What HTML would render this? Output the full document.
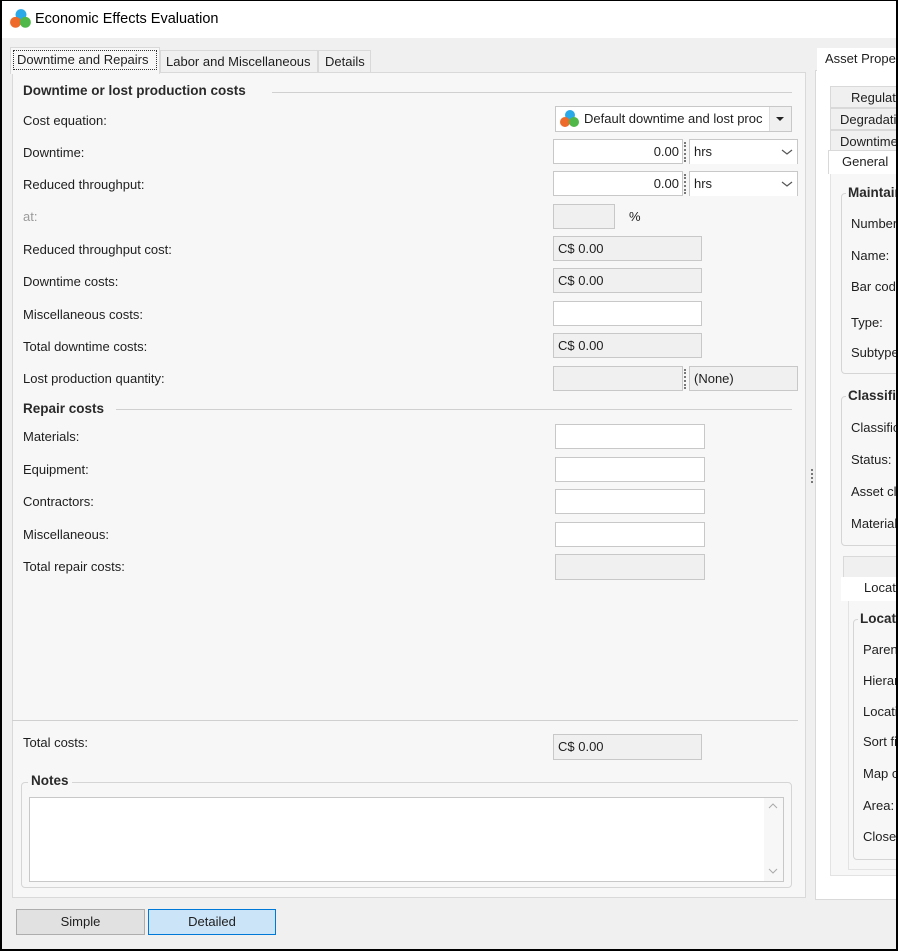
<!DOCTYPE html>
<html><head><meta charset="utf-8"><style>
*{box-sizing:border-box;margin:0;padding:0}
body{width:898px;height:951px;position:relative;overflow:hidden;background:#f0f0f0;font-family:"Liberation Sans",sans-serif;font-size:13px;color:#1e1e1e}
.a{position:absolute;white-space:nowrap}
.l{position:absolute;left:23px;line-height:16px}
.b{font-weight:bold;font-size:13.5px;color:#2a2a2a}
.f{position:absolute;border:1px solid #c8c8c8;background:#fff;height:25px;line-height:23px;padding-left:4px}
.g{background:#f0f0f0}
.hl{position:absolute;height:1px;background:#d0d0d0}
.dots{position:absolute;width:2px;border-left:2px dotted #777}
</style></head><body>
<div class="a" style="left:0;top:0;width:898px;height:38px;background:#fff"></div>
<svg class="a" style="left:9px;top:8px" width="24" height="22" viewBox="0 0 22 20">
<circle cx="11" cy="6" r="5" fill="#2aa9e8"/><circle cx="6" cy="13" r="5" fill="#ee6a2a"/><circle cx="15" cy="13" r="5" fill="#4fb848"/></svg>
<div class="a" style="left:35px;top:11px;font-size:14.5px;color:#000">Economic Effects Evaluation</div>
<div class="a" style="left:160px;top:50px;width:158px;height:23px;background:#f0f0f0;border:1px solid #d9d9d9;padding:3px 0 0 5px">Labor and Miscellaneous</div>
<div class="a" style="left:318px;top:50px;width:53px;height:23px;background:#f0f0f0;border:1px solid #d9d9d9;padding:3px 0 0 6px">Details</div>
<div class="a" style="left:12px;top:72px;width:794px;height:826px;background:#f7f7f7;border:1px solid #d9d9d9"></div>
<div class="a" style="left:10px;top:47px;width:150px;height:27px;background:#f7f7f7;border:1px solid #d9d9d9;border-bottom:none"></div>
<div class="a" style="left:13px;top:50px;width:144px;height:20px;border:1px dotted #333;padding:1px 0 0 3px">Downtime and Repairs</div>
<div class="l b" style="top:83px">Downtime or lost production costs</div>
<div class="hl" style="left:272px;top:92px;width:520px"></div>
<div class="l" style="top:113px">Cost equation:</div>
<div class="l" style="top:145px">Downtime:</div>
<div class="l" style="top:177px">Reduced throughput:</div>
<div class="l" style="top:209px;color:#9a9a9a">at:</div>
<div class="l" style="top:242px">Reduced throughput cost:</div>
<div class="l" style="top:274px">Downtime costs:</div>
<div class="l" style="top:307px">Miscellaneous costs:</div>
<div class="l" style="top:339px">Total downtime costs:</div>
<div class="l" style="top:371px">Lost production quantity:</div>
<div class="f" style="left:555px;top:106px;width:237px;height:26px;background:#fff;padding-left:28px">Default downtime and lost proc</div>
<svg class="a" style="left:559px;top:109px" width="22" height="20" viewBox="0 0 22 20"><circle cx="11" cy="6" r="5" fill="#2aa9e8"/><circle cx="6" cy="13" r="5" fill="#ee6a2a"/><circle cx="15" cy="13" r="5" fill="#4fb848"/></svg>
<div class="a" style="left:769px;top:107px;width:22px;height:24px;background:#f0f0f0;border-left:1px solid #ddd"></div>
<div class="a" style="left:776px;top:117px;border:4px solid transparent;border-top:4px solid #222"></div>
<div class="f" style="left:553px;top:139px;width:130px;text-align:right;padding-right:3px">0.00</div>
<div class="dots" style="left:684px;top:142px;height:20px"></div>
<div class="f" style="left:689px;top:139px;width:109px;border-bottom:none">hrs</div>
<svg class="a" style="left:781px;top:148px" width="12" height="8"><path d="M1 2 L6 6 L11 2" fill="none" stroke="#555" stroke-width="1.2"/></svg>
<div class="f" style="left:553px;top:171px;width:130px;text-align:right;padding-right:3px">0.00</div>
<div class="dots" style="left:684px;top:174px;height:20px"></div>
<div class="f" style="left:689px;top:171px;width:109px;border-bottom:none">hrs</div>
<svg class="a" style="left:781px;top:180px" width="12" height="8"><path d="M1 2 L6 6 L11 2" fill="none" stroke="#555" stroke-width="1.2"/></svg>
<div class="f g" style="left:553px;top:204px;width:62px"></div>
<div class="a" style="left:629px;top:209px">%</div>
<div class="f g" style="left:553px;top:236px;width:149px">C$ 0.00</div>
<div class="f g" style="left:553px;top:268px;width:149px">C$ 0.00</div>
<div class="f" style="left:553px;top:301px;width:149px"></div>
<div class="f g" style="left:553px;top:333px;width:149px">C$ 0.00</div>
<div class="f g" style="left:553px;top:366px;width:130px"></div>
<div class="dots" style="left:684px;top:369px;height:20px"></div>
<div class="f g" style="left:689px;top:366px;width:109px">(None)</div>
<div class="l b" style="top:401px">Repair costs</div>
<div class="hl" style="left:116px;top:409px;width:676px"></div>
<div class="l" style="top:429px">Materials:</div>
<div class="l" style="top:462px">Equipment:</div>
<div class="l" style="top:494px">Contractors:</div>
<div class="l" style="top:527px">Miscellaneous:</div>
<div class="l" style="top:559px">Total repair costs:</div>
<div class="f" style="left:555px;top:424px;width:150px"></div>
<div class="f" style="left:555px;top:457px;width:150px"></div>
<div class="f" style="left:555px;top:489px;width:150px"></div>
<div class="f" style="left:555px;top:522px;width:150px"></div>
<div class="f g" style="left:555px;top:554px;width:150px;height:26px"></div>
<div class="hl" style="left:12px;top:720px;width:786px"></div>
<div class="l" style="top:735px">Total costs:</div>
<div class="f g" style="left:553px;top:734px;width:149px;height:26px">C$ 0.00</div>
<div class="a" style="left:21px;top:782px;width:771px;height:106px;border:1px solid #d5d5d5;border-radius:4px"></div>
<div class="a b" style="left:28px;top:773px;background:#f7f7f7;padding:0 3px">Notes</div>
<div class="a" style="left:29px;top:797px;width:755px;height:85px;background:#fff;border:1px solid #c8c8c8"></div>
<div class="a" style="left:764px;top:798px;width:19px;height:83px;background:#f7f7f7"></div>
<svg class="a" style="left:768px;top:803px" width="10" height="7"><path d="M1 5 L5 1 L9 5" fill="none" stroke="#aaa"/></svg>
<svg class="a" style="left:768px;top:868px" width="10" height="7"><path d="M1 1 L5 5 L9 1" fill="none" stroke="#aaa"/></svg>
<div class="a" style="left:16px;top:909px;width:129px;height:26px;background:#e1e1e1;border:1px solid #adadad;text-align:center;line-height:24px">Simple</div>
<div class="a" style="left:148px;top:909px;width:128px;height:26px;background:#cce4f7;border:1px solid #0078d7;text-align:center;line-height:24px">Detailed</div>
<div class="dots" style="left:811px;top:469px;height:14px"></div>
<div class="a" style="left:815px;top:70px;width:83px;height:830px;background:#fff;border:1px solid #d9d9d9"></div>
<div class="a" style="left:817px;top:48px;width:81px;height:24px;background:#fff;padding:3px 0 0 8px">Asset Properties</div>
<div class="a" style="left:830px;top:86px;width:68px;height:22px;background:#f0f0f0;border:1px solid #d9d9d9;padding:3px 0 0 20px">Regulatory</div>
<div class="a" style="left:830px;top:108px;width:68px;height:22px;background:#f0f0f0;border:1px solid #d9d9d9;padding:3px 0 0 9px">Degradation</div>
<div class="a" style="left:830px;top:130px;width:68px;height:22px;background:#f0f0f0;border:1px solid #d9d9d9;padding:3px 0 0 9px">Downtime</div>
<div class="a" style="left:830px;top:172px;width:68px;height:704px;background:#f7f7f7;border:1px solid #e3e3e3"></div>
<div class="a" style="left:828px;top:150px;width:70px;height:24px;background:#fff;border:1px solid #d9d9d9;border-bottom:none;padding:3px 0 0 13px">General</div>
<div class="a" style="left:841px;top:193px;width:70px;height:181px;border:1px solid #d5d5d5;border-radius:4px"></div>
<div class="a b" style="left:846px;top:185px;background:#f7f7f7;padding:0 2px">Maintainable</div>
<div class="a" style="left:851px;top:216px">Number:</div>
<div class="a" style="left:851px;top:248px">Name:</div>
<div class="a" style="left:851px;top:279px">Bar code:</div>
<div class="a" style="left:851px;top:315px">Type:</div>
<div class="a" style="left:851px;top:345px">Subtype:</div>
<div class="a" style="left:841px;top:396px;width:70px;height:150px;border:1px solid #d5d5d5;border-radius:4px"></div>
<div class="a b" style="left:846px;top:388px;background:#f7f7f7;padding:0 2px">Classification</div>
<div class="a" style="left:851px;top:420px">Classification:</div>
<div class="a" style="left:851px;top:452px">Status:</div>
<div class="a" style="left:851px;top:484px">Asset class:</div>
<div class="a" style="left:851px;top:516px">Material:</div>
<div class="a" style="left:843px;top:556px;width:55px;height:22px;background:#f0f0f0;border:1px solid #d9d9d9"></div>
<div class="a" style="left:848px;top:600px;width:50px;height:270px;background:#f7f7f7;border:1px solid #e3e3e3"></div>
<div class="a" style="left:841px;top:577px;width:57px;height:24px;background:#fff;padding:3px 0 0 23px">Location</div>
<div class="a" style="left:853px;top:619px;width:60px;height:241px;border:1px solid #d5d5d5;border-radius:4px"></div>
<div class="a b" style="left:858px;top:611px;background:#f7f7f7;padding:0 2px">Location</div>
<div class="a" style="left:863px;top:642px">Parent:</div>
<div class="a" style="left:863px;top:673px">Hierarchy:</div>
<div class="a" style="left:863px;top:704px">Location:</div>
<div class="a" style="left:863px;top:734px">Sort field:</div>
<div class="a" style="left:863px;top:766px">Map coord:</div>
<div class="a" style="left:863px;top:798px">Area:</div>
<div class="a" style="left:863px;top:829px">Closest:</div>
<div class="a" style="left:0;top:0;width:898px;height:951px;border:2px solid #000;border-top:1px solid #000"></div>
</body></html>
